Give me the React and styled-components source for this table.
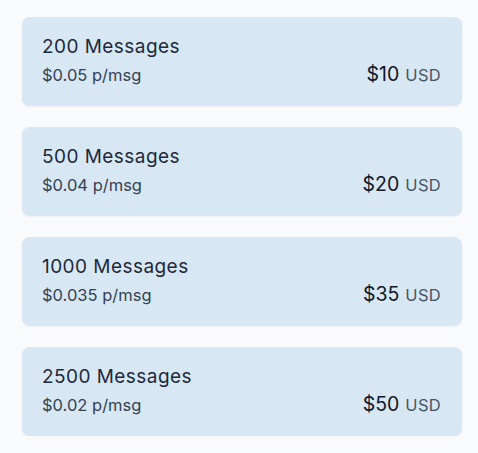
import React from 'react'
import styled, { createGlobalStyle } from 'styled-components'

const GlobalStyle = createGlobalStyle`
  body {
    margin: 0;
    background: #f8fafc;
    font-family: 'Inter', 'Noto Sans', sans-serif;
  }
`

const List = styled.div`
  display: flex;
  flex-direction: column;
  gap: 21px;
  width: 440px;
  padding: 17px 0 0 22px;
`

const Card = styled.div`
  display: flex;
  justify-content: space-between;
  align-items: last baseline;
  height: 89px;
  box-sizing: border-box;
  padding: 18px 21px 21px 20px;
  background: #d7e7f3;
  border-radius: 8px;
  box-shadow: 0 1px 2px rgba(15, 23, 42, 0.05);
`

const Info = styled.div`
  display: flex;
  flex-direction: column;
  gap: 6px;
`

const Title = styled.div`
  font-size: 19px;
  line-height: 24px;
  color: #1e293b;
  letter-spacing: 0.45px;
`

const Rate = styled.div`
  font-size: 16.5px;
  line-height: 20px;
  color: #334155;
`

const Price = styled.div`
  font-size: 19.5px;
  line-height: 20px;
  color: #0f172a;
`

const Currency = styled.span`
  margin-left: 6px;
  font-size: 16.5px;
  color: #475569;
  letter-spacing: 0.3px;
`

const plans = [
  { count: 200, rate: '0.05', price: 10 },
  { count: 500, rate: '0.04', price: 20 },
  { count: 1000, rate: '0.035', price: 35 },
  { count: 2500, rate: '0.02', price: 50 },
]

export default function App() {
  return (
    <>
      <GlobalStyle />
      <List>
        {plans.map((p) => (
          <Card key={p.count}>
            <Info>
              <Title>{p.count} Messages</Title>
              <Rate>${p.rate} p/msg</Rate>
            </Info>
            <Price>
              ${p.price}
              <Currency>USD</Currency>
            </Price>
          </Card>
        ))}
      </List>
    </>
  )
}
